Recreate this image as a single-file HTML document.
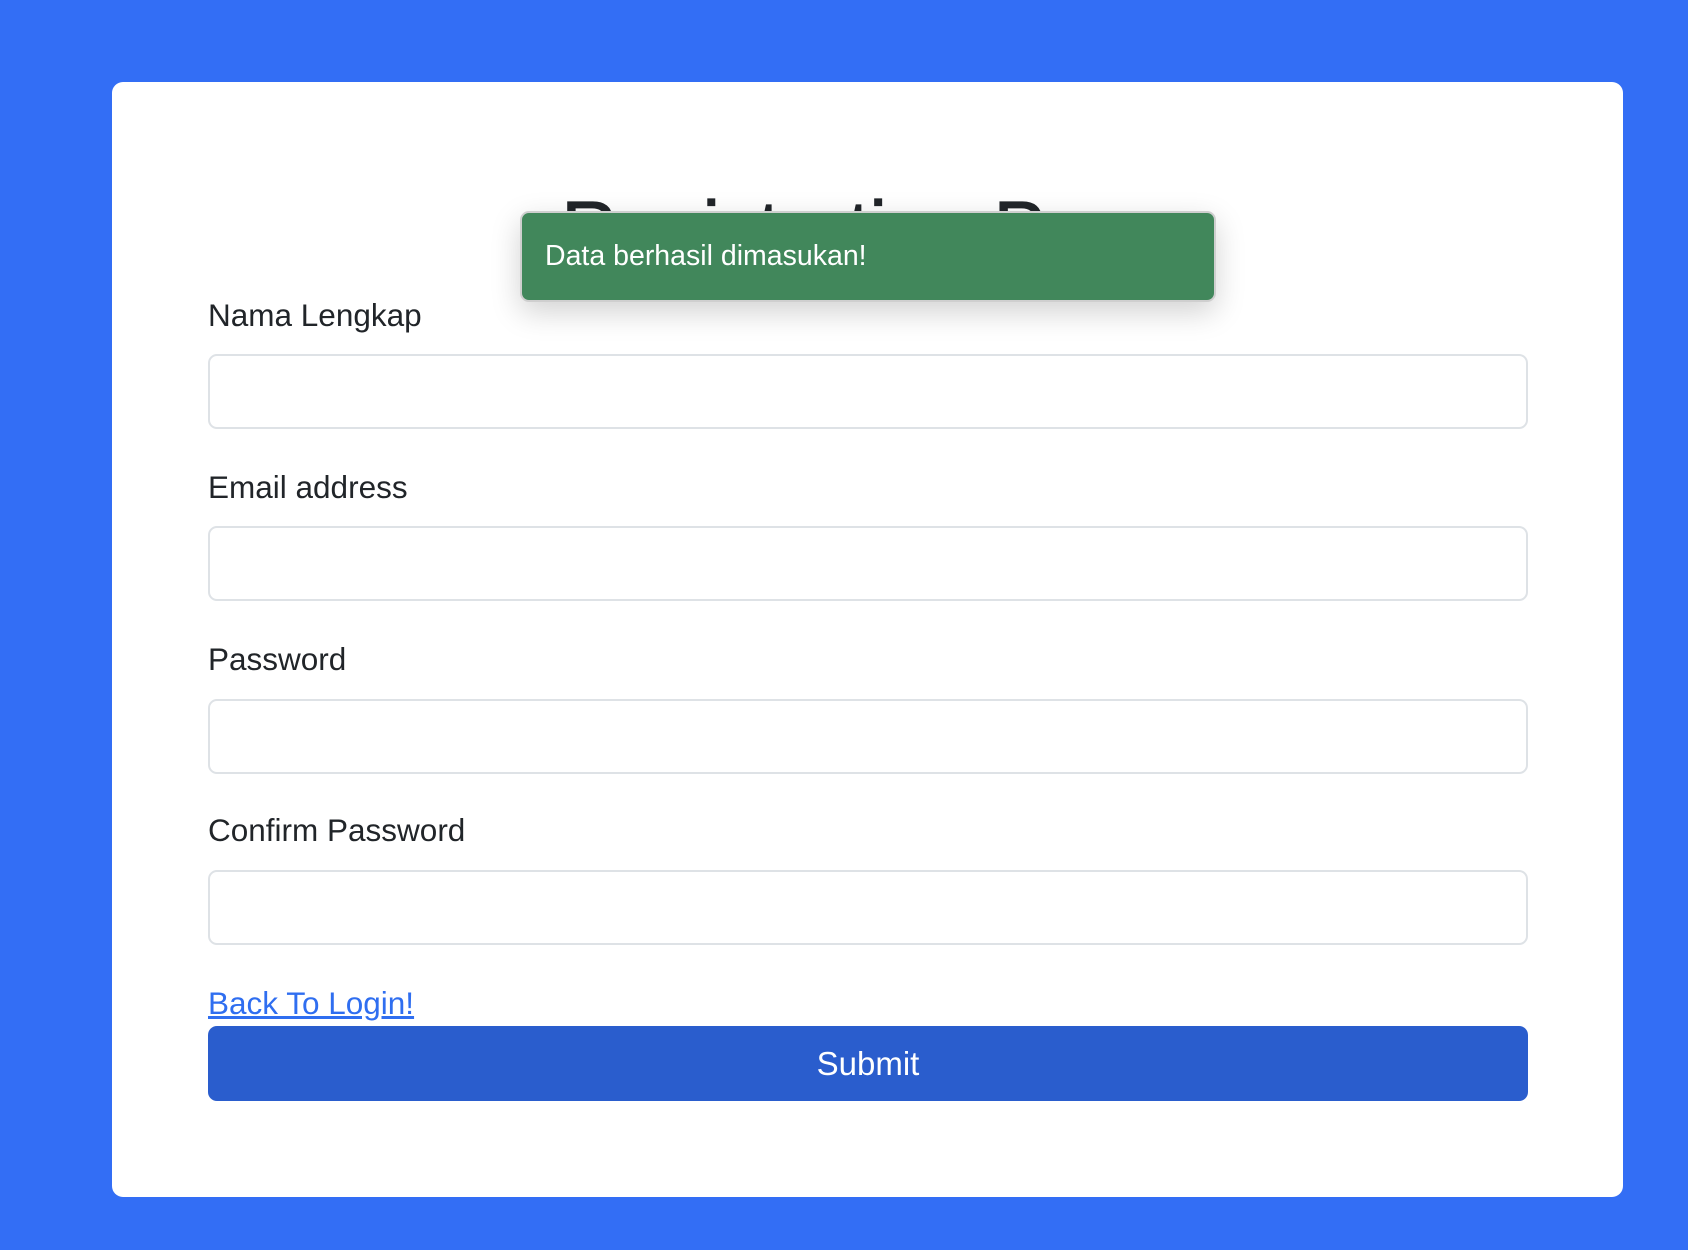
<!DOCTYPE html>
<html><head><meta charset="utf-8"><style>
*{box-sizing:border-box;margin:0;padding:0}
body{width:1688px;height:1250px;background:#336ef5;font-family:"Liberation Sans",sans-serif;color:#212529;position:relative;overflow:hidden}
.card{position:absolute;left:112px;top:82px;width:1511px;height:1115px;background:#fff;border-radius:11px}
h1{position:absolute;top:184px;text-align:center;font-size:77px;font-weight:normal;line-height:90px;color:#212529;-webkit-text-stroke:1.2px #212529}
.lbl{position:absolute;left:208px;font-size:31.5px;line-height:36px}
.inp{position:absolute;left:208px;width:1320px;height:75px;border:2px solid #dee2e6;border-radius:9px;background:#fff}
a{position:absolute;left:208px;top:984px;font-size:31.5px;line-height:38px;color:#2f6ef0;text-decoration:underline}
.btn{position:absolute;left:208px;top:1026px;width:1320px;height:75px;background:#2a5dcd;border-radius:9px;color:#fff;font-size:33px;text-align:center;line-height:75px}
.toast{position:absolute;left:520px;top:211px;width:696px;height:91px;background:#41875b;border:2px solid #cfcfcf;border-radius:9px;box-shadow:0 10px 30px rgba(0,0,0,.18);color:#fff;font-size:28.5px;line-height:87px;padding-left:23px}
</style></head><body>
<div class="card"></div>
<h1 style="left:112px;width:1511px">Registration Page</h1>
<div class="lbl" style="top:297px">Nama Lengkap</div>
<div class="inp" style="top:354px"></div>
<div class="lbl" style="top:469px">Email address</div>
<div class="inp" style="top:526px"></div>
<div class="lbl" style="top:641px">Password</div>
<div class="inp" style="top:699px"></div>
<div class="lbl" style="top:812px">Confirm Password</div>
<div class="inp" style="top:870px"></div>
<a>Back To Login!</a>
<div class="btn">Submit</div>
<div class="toast">Data berhasil dimasukan!</div>
</body></html>
